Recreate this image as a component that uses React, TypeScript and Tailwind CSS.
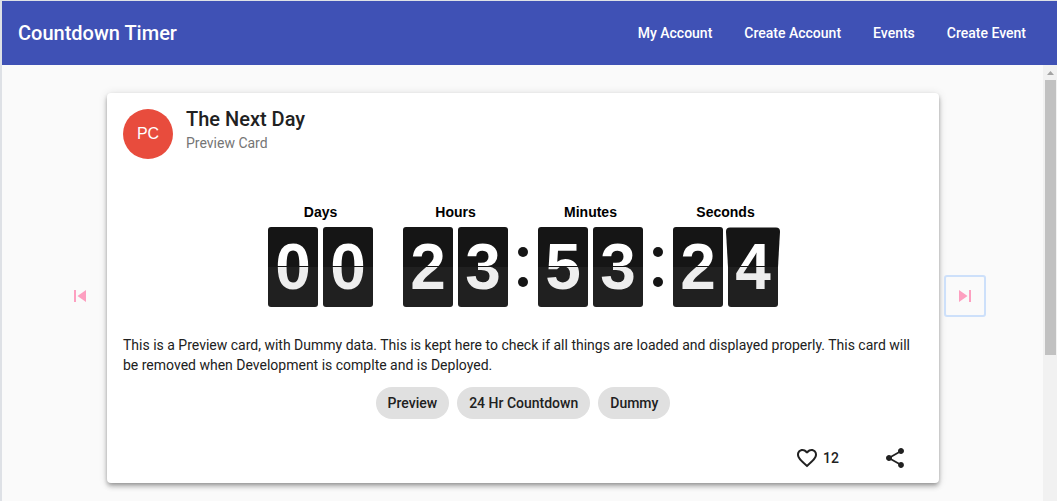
import { MdFavoriteBorder, MdShare, MdSkipNext, MdSkipPrevious } from "react-icons/md";

const links = ["My Account", "Create Account", "Events", "Create Event"];
const tags = ["Preview", "24 Hr Countdown", "Dummy"];
const units = [
  { label: "Days", digits: ["0", "0"], colon: false },
  { label: "Hours", digits: ["2", "3"], colon: true },
  { label: "Minutes", digits: ["5", "3"], colon: true },
  { label: "Seconds", digits: ["2", "4"], colon: false },
];

function Digit({ value, flipping }: { value: string; flipping: boolean }) {
  return (
    <div className="relative h-20 w-[50px]">
      <div className="absolute inset-x-0 bottom-0 h-10 rounded-b-[3px] bg-[#202020]" />
      {flipping ? (
        <svg className="absolute -left-0.5 top-0 h-10 w-[54px]" viewBox="0 0 54 40" aria-hidden="true">
          <path d="M4 0.5H50Q54 0.5 54 4.5L52 40H2L0 4.5Q0 0.5 4 0.5Z" fill="#151515" />
        </svg>
      ) : (
        <div className="absolute inset-x-0 top-0 h-10 rounded-t-[3px] bg-[#151515]" />
      )}
      <span className="relative block bg-linear-to-b from-white from-50% to-[#eeeeee] to-50% bg-clip-text text-center text-[64px] leading-[80px] font-bold text-transparent">
        {value}
      </span>
      <div className="absolute inset-x-0 top-[39px] h-px bg-[#151515]" />
    </div>
  );
}

function Clock() {
  return (
    <div className="flex justify-center gap-[30px] font-['Liberation_Sans',Arial,sans-serif]" role="timer">
      {units.map((unit) => (
        <div key={unit.label} className="relative">
          <div className="pb-[3px] text-center text-sm leading-6 font-bold text-black">{unit.label}</div>
          <div className="flex gap-[5px]">
            {unit.digits.map((digit, i) => (
              <Digit key={i} value={digit} flipping={unit.label === "Seconds" && i === 1} />
            ))}
          </div>
          {unit.colon && (
            <div className="absolute -right-5 bottom-5 flex flex-col gap-5" aria-hidden="true">
              <span className="size-2.5 rounded-full bg-[#151515]" />
              <span className="size-2.5 rounded-full bg-[#151515]" />
            </div>
          )}
        </div>
      ))}
    </div>
  );
}

export default function App() {
  return (
    <div className="flex min-h-screen flex-col border-t border-l-2 border-[#dee1e6] bg-[#fafafa] font-[Roboto,sans-serif] text-[#212121]">
      <header className="flex h-16 items-center justify-between bg-[#3f51b5] pr-[15px] pl-4 text-white">
        <h1 className="text-xl font-medium">Countdown Timer</h1>
        <nav className="flex text-sm font-medium">
          {links.map((link) => (
            <a key={link} href="#" className="px-4 py-2">
              {link}
            </a>
          ))}
        </nav>
      </header>

      <div className="flex flex-1">
        <main className="flex flex-1 items-center pt-7 pb-[18px] pl-px">
          <div className="flex w-1/10 justify-end pt-4 pr-[7px]">
            <button type="button" aria-label="Previous event" className="grid size-10 place-items-center rounded text-[#fd9fc0]">
              <MdSkipPrevious size={24} />
            </button>
          </div>

          <article className="w-4/5 rounded bg-white p-4 pb-[5px] shadow-[0_2px_4px_-1px_rgba(0,0,0,0.3),0_4px_5px_rgba(0,0,0,0.16),0_1px_10px_rgba(0,0,0,0.12)]">
            <div className="flex gap-[13px]">
              <div className="grid size-[50px] place-items-center rounded-full bg-[#e84c3d] font-['Liberation_Sans',Arial,sans-serif] text-base text-white">
                PC
              </div>
              <div>
                <h2 className="text-xl leading-5 font-medium">The Next Day</h2>
                <p className="pt-1 text-sm text-[#757575]">Preview Card</p>
              </div>
            </div>

            <div className="pt-[41px]">
              <Clock />
            </div>

            <p className="pt-7 text-sm">
              This is a Preview card, with Dummy data. This is kept here to check if all things are loaded and displayed
              properly. This card will be removed when Development is complte and is Deployed.
            </p>

            <ul className="flex justify-center gap-2 pt-3">
              {tags.map((tag) => (
                <li key={tag} className="rounded-full bg-[#e0e0e0] px-3 py-1.5 text-sm font-medium">
                  {tag}
                </li>
              ))}
            </ul>

            <div className="flex items-center justify-end gap-9 pt-[19px] pr-2">
              <button type="button" aria-label="Like, 12 likes" className="flex h-10 items-center gap-1 text-sm font-medium">
                <MdFavoriteBorder size={24} />
                12
              </button>
              <button type="button" aria-label="Share" className="grid size-10 place-items-center">
                <MdShare size={24} />
              </button>
            </div>
          </article>

          <div className="flex w-1/10 pt-4 pl-[5px]">
            <button
              type="button"
              aria-label="Next event"
              className="grid size-[42px] place-items-center rounded-[3px] border-2 border-[#cde0fa] text-[#fd9fc0]"
            >
              <MdSkipNext size={24} />
            </button>
          </div>
        </main>

        <div className="flex w-3.5 flex-col items-center gap-[5px] bg-[#f1f1f1] pt-1.5" aria-hidden="true">
          <svg className="h-1 w-[7px]" viewBox="0 0 7 4">
            <path d="M3.5 0L7 4H0Z" fill="#a3a3a3" />
          </svg>
          <div className="h-[275px] w-[11px] bg-[#c1c1c1]" />
        </div>
      </div>
    </div>
  );
}
